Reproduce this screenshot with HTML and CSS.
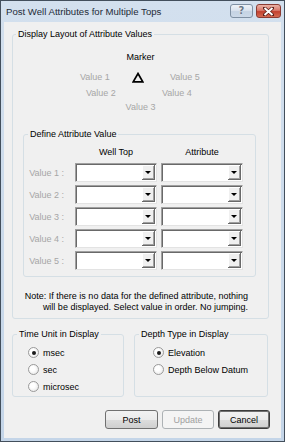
FILE: index.html
```html
<!DOCTYPE html>
<html lang="en">
<head>
    <meta charset="UTF-8">
    <title>Post Well Attributes for Multiple Tops</title>
    <link rel="stylesheet" href="styles.css">
</head>
<body>
    <div class="window">
        <div class="titlebar">
            <span class="title">Post Well Attributes for Multiple Tops</span>
            <div class="caption-buttons">
                <button class="cap-btn help-btn">?</button>
                <button class="cap-btn close-btn">
                    <svg width="11" height="9" viewBox="0 0 11 9">
                        <path d="M1.5 1 L9.5 8 M9.5 1 L1.5 8" stroke="#5a1d18" stroke-width="3.4" stroke-linecap="square"/>
                        <path d="M1.5 1 L9.5 8 M9.5 1 L1.5 8" stroke="#fff" stroke-width="2"/>
                    </svg>
                </button>
            </div>
        </div>

        <div class="client">
            <!-- layout preview -->
            <fieldset class="group layout-group">
                <legend>Display Layout of Attribute Values</legend>
                <div class="marker-title">Marker</div>
                <div class="layout-row row-1">
                    <span class="slot slot-1">Value 1</span>
                    <svg class="marker" width="12" height="11" viewBox="0 0 12 11">
                        <polygon points="6,1.5 10.8,9.8 1.2,9.8" fill="none" stroke="#000" stroke-width="1.7"/>
                    </svg>
                    <span class="slot slot-5">Value 5</span>
                </div>
                <div class="layout-row row-2">
                    <span class="slot slot-2">Value 2</span>
                    <span class="slot">Value 4</span>
                </div>
                <div class="layout-row row-3">
                    <span class="slot">Value 3</span>
                </div>

                <fieldset class="group define-group">
                    <legend>Define Attribute Value</legend>
                    <div class="define-grid">
                        <span></span>
                        <span class="col-head">Well Top</span>
                        <span class="col-head">Attribute</span>
                    </div>
                    <div class="define-rows">
                        <div class="define-grid">
                            <span class="row-label">Value 1 :</span>
                            <div class="combo"><span class="combo-btn"></span></div>
                            <div class="combo"><span class="combo-btn"></span></div>
                        </div>
                        <div class="define-grid">
                            <span class="row-label">Value 2 :</span>
                            <div class="combo"><span class="combo-btn"></span></div>
                            <div class="combo"><span class="combo-btn"></span></div>
                        </div>
                        <div class="define-grid">
                            <span class="row-label">Value 3 :</span>
                            <div class="combo"><span class="combo-btn"></span></div>
                            <div class="combo"><span class="combo-btn"></span></div>
                        </div>
                        <div class="define-grid">
                            <span class="row-label">Value 4 :</span>
                            <div class="combo"><span class="combo-btn"></span></div>
                            <div class="combo"><span class="combo-btn"></span></div>
                        </div>
                        <div class="define-grid">
                            <span class="row-label">Value 5 :</span>
                            <div class="combo"><span class="combo-btn"></span></div>
                            <div class="combo"><span class="combo-btn"></span></div>
                        </div>
                    </div>
                </fieldset>

                <p class="note">Note: If there is no data for the defined attribute, nothing<br>will be displayed. Select value in order. No jumping.</p>
            </fieldset>

            <div class="option-groups">
                <fieldset class="group time-group">
                    <legend>Time Unit in Display</legend>
                    <div class="radio-list">
                        <label class="radio-row"><span class="radio checked"></span>msec</label>
                        <label class="radio-row"><span class="radio"></span>sec</label>
                        <label class="radio-row"><span class="radio"></span>microsec</label>
                    </div>
                </fieldset>
                <fieldset class="group depth-group">
                    <legend>Depth Type in Display</legend>
                    <div class="radio-list">
                        <label class="radio-row"><span class="radio checked"></span>Elevation</label>
                        <label class="radio-row"><span class="radio"></span>Depth Below Datum</label>
                    </div>
                </fieldset>
            </div>

            <div class="actions">
                <button class="btn post-btn">Post</button>
                <button class="btn update-btn" disabled>Update</button>
                <button class="btn cancel-btn">Cancel</button>
            </div>
        </div>
    </div>
</body>
</html>
```

FILE: styles.css
```css
* {
    box-sizing: border-box;
}

body {
    margin: 0;
    font-family: "Liberation Sans", Arial, sans-serif;
    font-size: 9px;
    color: #000;
}

.window {
    width: 285px;
    height: 442px;
    border: 1px solid #434f5c;
    background: linear-gradient(#d3e0ee, #c4d5e8);
    padding: 0 3px 3px;
    display: flex;
    flex-direction: column;
}

/* title bar */
.titlebar {
    height: 21px;
    display: flex;
    align-items: flex-start;
    justify-content: space-between;
    padding-left: 2px;
}

.title {
    font-size: 9.6px;
    line-height: 12px;
    margin-top: 5px;
    color: #1e2b38;
}

.caption-buttons {
    display: flex;
    gap: 3px;
    margin-top: 3px;
}

.cap-btn {
    height: 14px;
    border-radius: 3px;
    padding: 0;
    display: flex;
    align-items: center;
    justify-content: center;
}

.help-btn {
    width: 23px;
    border: 1px solid #7f90a3;
    background: linear-gradient(#eef3f8 0%, #dae3ee 45%, #c5d3e3 55%, #ccd9e8 100%);
    color: #6a7888;
    font-family: "DejaVu Sans", sans-serif;
    font-size: 10px;
    font-weight: bold;
    line-height: 12px;
    text-shadow: 0 0 1px #fff;
}

.close-btn {
    width: 25px;
    border: 1px solid #8b3b33;
    background: linear-gradient(#eab2a6 0%, #d9786a 45%, #c2402f 55%, #d46a52 100%);
}

/* client area */
.client {
    flex: 1;
    background: #f0f0f0;
    display: flex;
    flex-direction: column;
}

.group {
    border: 1px solid #d5dfe5;
    border-radius: 3px;
    margin: 0;
    padding: 0;
    min-width: 0;
}

.group legend {
    padding: 0 2px;
    line-height: 12px;
    margin-left: 3px;
}

.layout-group {
    margin: 6px 0 0 8px;
    width: 257px;
    padding-bottom: 6px;
}

.marker-title {
    margin-top: 11px;
    line-height: 12px;
    text-align: center;
}

.layout-row {
    display: flex;
    align-items: center;
    height: 12px;
    line-height: 12px;
}

.slot {
    color: #a6a6a6;
}

.row-1 {
    margin-top: 8px;
    padding-left: 67px;
}

.slot-1 {
    width: 52px;
}

.slot-5 {
    margin-left: 26px;
}

.row-2 {
    margin-top: 4px;
    padding-left: 73px;
}

.slot-2 {
    width: 76px;
}

.row-3 {
    margin-top: 2px;
    justify-content: center;
}

/* define attribute value */
.define-group {
    margin: 15px 0 0 10px;
    width: 233px;
    padding-bottom: 6px;
}

.define-group legend {
    margin-left: 4px;
}

.define-grid {
    display: grid;
    grid-template-columns: 47px 82px 82px;
    column-gap: 4px;
    align-items: center;
}

.col-head {
    margin-top: 6px;
    line-height: 12px;
    text-align: center;
}

.define-rows {
    margin-top: 5px;
    display: flex;
    flex-direction: column;
    gap: 3px;
}

.row-label {
    text-align: right;
    padding-right: 7px;
    color: #a6a6a6;
}

.combo {
    height: 19px;
    background: #fff;
    border: 1px solid #a0a0a0;
    border-right-color: #e3e3e3;
    border-bottom-color: #e3e3e3;
    box-shadow: inset 1px 1px 0 #696969;
    display: flex;
    justify-content: flex-end;
    padding: 1px 1px 1px 0;
}

.combo-btn {
    width: 13px;
    background: #f0f0f0;
    border-right: 1px solid #696969;
    border-bottom: 1px solid #696969;
    box-shadow: inset 1px 1px 0 #fff, inset -1px -1px 0 #a0a0a0;
    position: relative;
}

.combo-btn::after {
    content: "";
    position: absolute;
    left: 3px;
    top: 6px;
    border-left: 3px solid transparent;
    border-right: 3px solid transparent;
    border-top: 3px solid #000;
}

.note {
    margin: 14px 20px 0 0;
    line-height: 10.5px;
    text-align: right;
}

/* bottom option groups */
.option-groups {
    display: flex;
    gap: 10px;
    margin: 9px 0 0 8px;
}

.option-groups legend {
    margin-left: 4px;
}

.time-group {
    width: 112px;
}

.depth-group {
    width: 134px;
}

.radio-list {
    padding: 4px 0 1px 15px;
}

.depth-group .radio-list {
    padding-left: 18px;
}

.radio-row {
    display: flex;
    align-items: center;
    gap: 4px;
    height: 17px;
}

.radio {
    width: 11px;
    height: 11px;
    border-radius: 50%;
    border: 1px solid #9a9a9a;
    background: radial-gradient(circle at 40% 40%, #ffffff 30%, #e0e0e0 100%);
    display: flex;
    align-items: center;
    justify-content: center;
}

.radio.checked::after {
    content: "";
    width: 4px;
    height: 4px;
    border-radius: 50%;
    background: #1a1a1a;
}

/* dialog buttons */
.actions {
    display: flex;
    justify-content: flex-end;
    gap: 4px;
    margin: 13px 11px 0 0;
}

.btn {
    width: 52px;
    height: 19px;
    font-family: inherit;
    font-size: 9px;
    padding: 0;
    border: 1px solid #707070;
    border-radius: 3px;
    background: linear-gradient(#f2f2f2 0%, #ebebeb 50%, #dddddd 51%, #cfcfcf 100%);
    color: #000;
}

.post-btn {
    width: 53px;
}

.btn:disabled {
    border-color: #adb2b5;
    background: #f4f4f4;
    color: #a0a0a0;
}

.cancel-btn {
    border-color: #3c3c3c;
    box-shadow: inset 0 0 0 1px #707070;
}
```
